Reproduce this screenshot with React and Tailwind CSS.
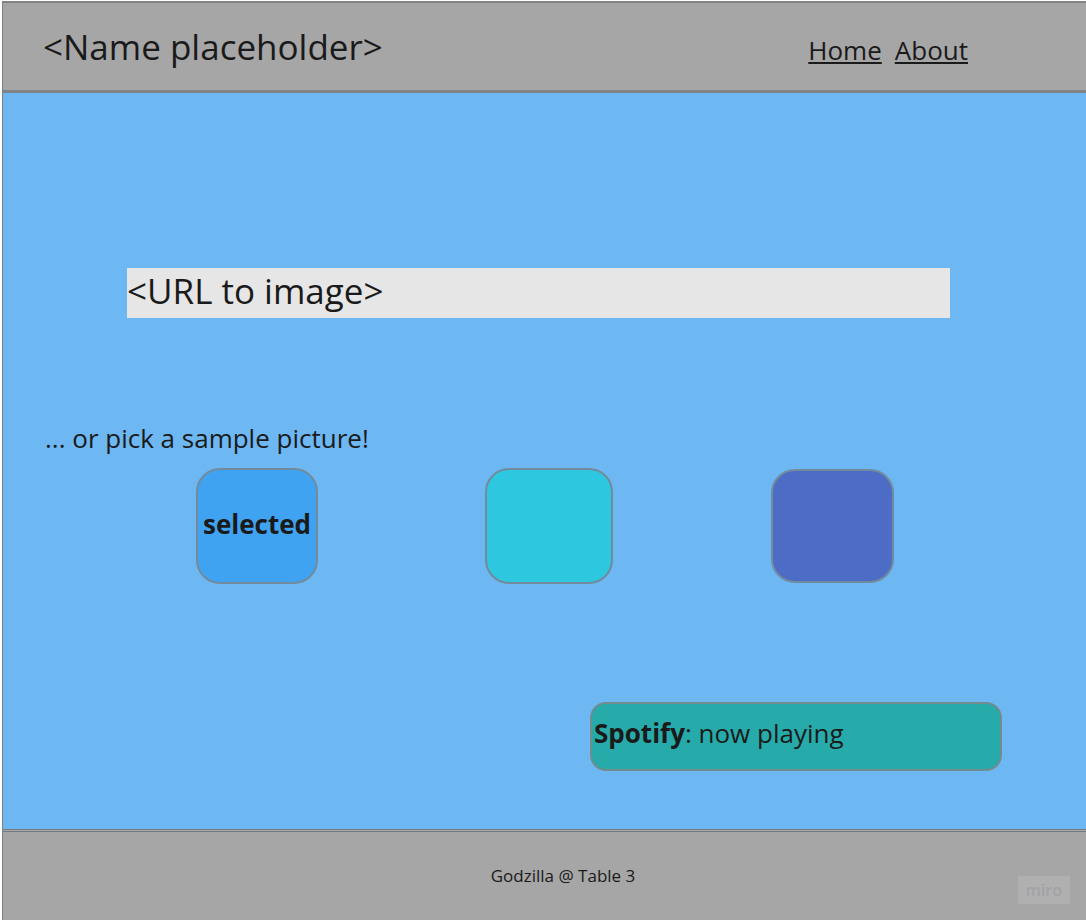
import { useState } from "react";

const samples = [
  { id: "sky", label: "Sky blue sample", look: "w-[122px] h-[116px] bg-[#40a3f2]" },
  { id: "cyan", label: "Cyan sample", look: "w-[128px] h-[116px] bg-[#2dc7df]" },
  { id: "indigo", label: "Indigo sample", look: "w-[123px] h-[114px] bg-[#4d6cc6]" },
];

function Header() {
  return (
    <header className="flex items-baseline justify-between border-t-2 border-b-3 border-[#808484] bg-[#a6a6a6] pt-5 pr-[118px] pb-[19px] pl-10">
      <h1 className="text-[35px] leading-12">&lt;Name placeholder&gt;</h1>
      <nav className="flex gap-[13px] text-[26px] leading-9">
        <a href="#home" className="underline decoration-2 underline-offset-2">Home</a>
        <a href="#about" className="underline decoration-2 underline-offset-2">About</a>
      </nav>
    </header>
  );
}

function SamplePicker() {
  const [selected, setSelected] = useState("sky");
  return (
    <section className="mt-[102px]">
      <h2 className="pl-[42px] text-[26px] leading-9">... or pick a sample picture!</h2>
      <div className="mt-3 grid grid-cols-[289fr_286fr_315fr] items-center pl-[193px]">
        {samples.map((s) => (
          <button
            key={s.id}
            type="button"
            aria-label={s.label}
            aria-pressed={selected === s.id}
            onClick={() => setSelected(s.id)}
            className={`rounded-3xl border-2 border-[#728b9c] pb-1 text-[26px] leading-9 font-bold ${s.look}`}
          >
            {selected === s.id ? "selected" : ""}
          </button>
        ))}
      </div>
    </section>
  );
}

export default function App() {
  return (
    <div className="min-h-screen bg-white pt-px pl-0.5 font-['Open_Sans','Noto_Sans',sans-serif] text-[#1a1a1a]">
      <div className="flex min-h-[calc(100vh-1px)] flex-col border-l border-[#808080] bg-[#6db7f3]">
        <Header />
        <main className="flex grow flex-col pb-[58px]">
          <div className="mt-[175px] mr-[136px] ml-[124px]">
            <input
              type="url"
              aria-label="URL to image"
              placeholder="<URL to image>"
              className="block h-[50px] w-full bg-[#e6e6e6] pb-1 text-[35px] outline-none placeholder:text-[#1a1a1a]"
            />
          </div>
          <SamplePicker />
          <p className="mt-auto mr-[84px] w-[412px] self-end rounded-2xl border-2 border-[#728b8c] bg-[#27abaa] pt-[11px] pb-[18px] pl-0.5 text-[26px] leading-9">
            <strong>Spotify</strong>: now playing
          </p>
        </main>
        <footer className="relative border-t-3 border-double border-[#747a80] bg-[#a6a6a6] pt-8 pr-4 pb-8 pl-[53px] text-center text-[17px] leading-6">
          Godzilla @ Table 3
          <span className="absolute right-4 bottom-4 bg-[#b0b0b0] px-2 py-0.5 text-[16px] leading-6 font-semibold text-[#a2a2a6]">
            miro
          </span>
        </footer>
      </div>
    </div>
  );
}
